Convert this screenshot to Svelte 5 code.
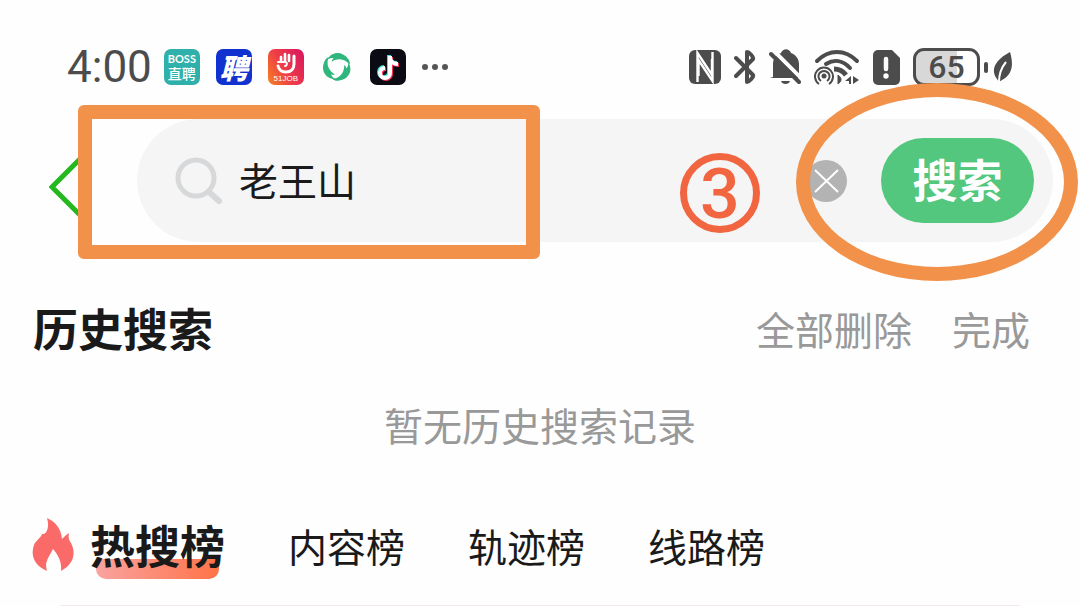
<script>
	const hotTitle = '热搜榜';
	const tabs = ['内容榜', '轨迹榜', '线路榜'];

	let keyword = $state('老王山');
	let active = $state(hotTitle);

	function clearKeyword() {
		keyword = '';
	}
</script>

<div class="page">
	<header class="status">
		<div class="group left">
			<span class="time">4:00</span>
			<span class="app boss"><b>BOSS</b><i>直聘</i></span>
			<span class="app pin">聘</span>
			<span class="app job">
				<svg width="24" height="22" viewBox="0 0 24 22" fill="none" stroke="#fff" stroke-linecap="round">
					<path d="M4 14c1 4 4 6 8 6 5 0 8-3 8-8V4" stroke-width="3" />
					<path d="M15 9V3M11 9V2M7 9V5" stroke-width="2.600" />
					<path d="M4 10h7c3 0 2 4 0 4" stroke-width="2" />
				</svg>
				<small>51JOB</small>
			</span>
			<svg class="swirl" width="30" height="30" viewBox="0 0 28 28" fill="#2fb67c">
				{#each [0, 120, 240] as angle}
					<path d="M5 7C9-1 19-1 24 6c2 2 2 4 2 6C22 7 16 5 9 9c0-1 1-3 2-3-2-1-4 0-6 1z" transform="rotate({angle} 14 14)" />
				{/each}
			</svg>
			<span class="app tiktok">
				<svg width="28" height="28" viewBox="0 0 28 28" fill="none" stroke-width="4">
					<path d="M15 2v17a5 5 0 1 1-5-5M15 3c0 4 3 7 8 7" stroke="#3de0dc" />
					<path d="M17 4v17a5 5 0 1 1-5-5M17 5c0 4 3 7 8 7" stroke="#f2305a" />
					<path d="M16 3v17a5 5 0 1 1-5-5M16 4c0 4 3 7 8 7" stroke="#fff" />
				</svg>
			</span>
			<svg class="dots" width="26" height="6" viewBox="0 0 26 6" fill="#555">
				<circle cx="3" cy="3" r="3" /><circle cx="13" cy="3" r="3" /><circle cx="23" cy="3" r="3" />
			</svg>
		</div>

		<div class="group right">
			<!-- nfc -->
			<svg width="32" height="34" viewBox="0 0 32 34">
				<rect width="32" height="34" rx="6" fill="#4c4c4c" />
				<path d="M8.500 32V3L23 25V9M23.500 2v29L9.500 10v16" fill="none" stroke="#fff" stroke-width="2.400" />
			</svg>
			<!-- bluetooth -->
			<svg width="22" height="36" viewBox="0 0 22 36" fill="none" stroke="#4c4c4c" stroke-width="4" stroke-linejoin="round" stroke-linecap="round">
				<path d="M2 9l17 17c1 2-4 7-6 7V3c2 0 7 5 6 7L2 27" />
			</svg>
			<!-- muted bell -->
			<svg width="32" height="36" viewBox="0 0 32 36">
				<path d="M4 28V15C4 9 8 6 12 4c2-5 8-5 10 0 5 2 8 6 8 11v13l1 1H1z" fill="#4c4c4c" />
				<path d="M12 32h9c-1 4-8 4-9 0z" fill="#4c4c4c" />
				<path d="M4 1l30 30" stroke="#fefefe" stroke-width="4" />
				<path d="M2 5l28 28" stroke="#4c4c4c" stroke-width="4" stroke-linecap="round" />
			</svg>
			<!-- wifi with hotspot -->
			<svg width="46" height="36" viewBox="0 0 46 36" fill="none" stroke="#4c4c4c">
				<path d="M3 12C15 0 31 0 43 12" stroke-width="4" stroke-linecap="round" />
				<path d="M12 15c8-5 17-4 24 4" stroke-width="4" stroke-linecap="round" />
				<path d="M20 20c6 0 9 2 12 6" stroke-width="5" />
				<path d="M24 26c4 3 4 6 0 9z" fill="#4c4c4c" stroke-width="1" />
				<circle cx="10" cy="27" r="2.500" fill="#4c4c4c" stroke="none" />
				<path d="M7 32a5.500 5.500 0 1 1 6 0M5 35a9 9 0 1 1 10 0" stroke-width="2" />
				<path d="M37 27v8h-2v-3h-4zM39 35v-8l6 4z" fill="#4c4c4c" stroke="none" />
			</svg>
			<!-- sim alert -->
			<svg width="27" height="35" viewBox="0 0 27 35">
				<path d="M5 0h14l8 8v22a5 5 0 0 1-5 5H5a5 5 0 0 1-5-5V5a5 5 0 0 1 5-5z" fill="#4c4c4c" />
				<path d="M13 9v10" stroke="#fff" stroke-width="4.500" stroke-linecap="round" />
				<circle cx="13" cy="26" r="2.700" fill="#fff" />
			</svg>
			<span class="battery">65</span>
			<!-- power saving leaf -->
			<svg width="20" height="30" viewBox="0 0 20 30">
				<path d="M17 0c3 10 4 22-8 28L6 30l-2-3C-3 18 2 8 17 0z" fill="#4c4c4c" />
				<path d="M13 10C8 16 6 22 6 30" fill="none" stroke="#fff" stroke-width="2" />
			</svg>
		</div>
	</header>

	<div class="search-row">
		<button class="back" aria-label="返回">
			<svg width="34" height="62" viewBox="0 0 34 62" fill="none" stroke="#22b81e" stroke-width="5">
				<path d="M31 3L3 31l28 28" />
			</svg>
		</button>
		<form class="search" onsubmit={(e) => e.preventDefault()}>
			<svg width="48" height="48" viewBox="0 0 48 48" fill="none" stroke="#d6d8da">
				<circle cx="21" cy="21" r="18" stroke-width="5" />
				<path d="M34 35l10 9" stroke-width="6" stroke-linecap="round" />
			</svg>
			<input type="text" aria-label="搜索关键词" bind:value={keyword} />
			<button type="button" class="clear" aria-label="清空" onclick={clearKeyword}>
				<svg width="42" height="42" viewBox="0 0 42 42">
					<circle cx="21" cy="21" r="21" fill="#b3b3b3" />
					<path d="M10 10l23 22M33 10L10 32" stroke="#fff" stroke-width="2" />
				</svg>
			</button>
			<button type="submit" class="submit">搜索</button>
		</form>

		<!-- tutorial marks drawn over the search row -->
		<div class="mark box"></div>
		<div class="mark step">3</div>
		<div class="mark ring"></div>
	</div>

	<section class="history">
		<div class="history-head">
			<h2>历史搜索</h2>
			<button>全部删除</button>
			<button>完成</button>
		</div>
		<p>暂无历史搜索记录</p>
	</section>

	<nav class="tabs">
		<button class="hot" onclick={() => (active = hotTitle)}>
			<svg width="42" height="54" viewBox="0 0 42 54">
				<path
					d="M15 0c9 4 14 11 15 21 2-2 4-4 7-6-1 5 0 7 2 10 6 12 1 22-10 28 1-8-2-15-8-22-4 8-9 13-6 22C3 48-2 38 2 27c2-5 6-6 8-11 4 1 8-6 5-16z"
					fill="#f96a69"
				/>
			</svg>
			<span class:active={active === hotTitle}>{hotTitle}</span>
		</button>
		{#each tabs as tab}
			<button class:current={active === tab} onclick={() => (active = tab)}>{tab}</button>
		{/each}
	</nav>
	<hr />
</div>

<style>
	:global(body) {
		margin: 0;
		background: #fefefe;
	}

	.page {
		font-family: 'Noto Sans CJK SC', sans-serif;
		color: #1a1a1a;
		overflow: hidden;
	}

	button {
		padding: 0;
		border: none;
		background: none;
		font: inherit;
		color: inherit;
		white-space: nowrap;
		cursor: pointer;
	}

	svg {
		display: block;
		flex: none;
	}

	.status {
		display: flex;
		justify-content: space-between;
		padding: 31px 67px 16px;
	}

	.group {
		display: flex;
		align-items: center;
		height: 72px;
	}

	.left {
		gap: 16px;
	}

	.right {
		gap: 13px;
	}

	.time {
		font: 44px/48px Roboto, sans-serif;
		color: #4c4c4c;
		margin-right: -4px;
	}

	.app {
		display: flex;
		flex-direction: column;
		align-items: center;
		justify-content: center;
		width: 36px;
		height: 36px;
		border-radius: 7px;
		color: #fff;
	}

	.boss {
		background: #2fb0aa;
	}

	.boss b {
		font: 700 11px/12px Lato, sans-serif;
	}

	.boss i {
		font-style: normal;
		font-weight: 500;
		font-size: 14px;
		line-height: 17px;
	}

	.pin {
		background: #1232cf;
		font-size: 28px;
		font-weight: 900;
		font-style: italic;
		line-height: 36px;
	}

	.job {
		background: linear-gradient(60deg, #f5821f, #ee3d48 45%, #d81460);
	}

	.job small {
		font: 8px/9px 'Liberation Sans', sans-serif;
	}

	.swirl {
		margin: 0 2px;
	}

	.tiktok {
		background: #0b0b14;
	}

	.battery {
		position: relative;
		width: 67px;
		height: 38px;
		box-sizing: border-box;
		border: 3px solid #4c4c4c;
		border-radius: 11px;
		background: linear-gradient(90deg, #d8d8d8 67%, #fefefe 67%);
		font: 500 32px/33px Roboto, sans-serif;
		text-align: center;
		color: #4c4c4c;
	}

	.battery::after {
		content: '';
		position: absolute;
		right: -11px;
		top: 11px;
		width: 4px;
		height: 11px;
		border-radius: 2px;
		background: #4c4c4c;
	}

	.search-row {
		position: relative;
		display: flex;
		align-items: center;
		padding: 0 27px 0 49px;
	}

	.back {
		width: 88px;
		padding-top: 12px;
	}

	.search {
		flex: 1;
		min-width: 0;
		display: flex;
		align-items: center;
		height: 123px;
		box-sizing: border-box;
		padding: 0 19px 0 38px;
		border-radius: 62px;
		background: #f5f5f5;
	}

	input {
		flex: 1;
		min-width: 0;
		margin: 0 16px;
		padding: 0 0 4px;
		border: none;
		outline: none;
		background: none;
		font: inherit;
		font-size: 39px;
		color: inherit;
	}

	.submit {
		width: 153px;
		height: 85px;
		margin-left: 34px;
		padding-bottom: 3px;
		border-radius: 43px;
		background: #52c77d;
		color: #fff;
		font-size: 45px;
		font-weight: 700;
		line-height: 82px;
	}

	.mark {
		position: absolute;
		box-sizing: border-box;
		pointer-events: none;
	}

	.box {
		left: 78px;
		top: -14px;
		width: 462px;
		height: 154px;
		border: 14px solid #f1914a;
		border-radius: 6px;
	}

	.step {
		right: 320px;
		top: 34px;
		width: 80px;
		height: 80px;
		border: 7px solid #f26541;
		border-radius: 50%;
		color: #f26541;
		font: 500 70px/68px Roboto, sans-serif;
		text-align: center;
	}

	.ring {
		right: 2px;
		top: -36px;
		width: 282px;
		height: 198px;
		border: 14px solid #f1914a;
		border-radius: 50%;
	}

	.history {
		padding-top: 56px;
	}

	.history-head {
		display: flex;
		align-items: center;
		gap: 40px;
		padding: 0 50px 0 33px;
	}

	h2 {
		flex: 1;
		margin: 0;
		font-size: 45px;
		line-height: 60px;
		font-weight: 700;
	}

	.history-head button,
	.history p {
		font-size: 39px;
		line-height: 60px;
		color: #999;
	}

	.history p {
		margin: 36px 0 0;
		text-align: center;
	}

	.tabs {
		display: flex;
		align-items: center;
		gap: 63px;
		padding: 61px 32px 0;
	}

	.tabs button {
		font-size: 39px;
		line-height: 60px;
	}

	.tabs .hot {
		display: flex;
		align-items: center;
		gap: 16px;
		font-size: 45px;
	}

	.hot span {
		position: relative;
		font-weight: 700;
	}

	.active::before {
		content: '';
		position: absolute;
		z-index: -1;
		left: 6px;
		right: 6px;
		bottom: -4px;
		height: 20px;
		border-radius: 0 0 10px 10px;
		background: linear-gradient(90deg, #f9a3a0, #ff7347);
	}

	.current {
		font-weight: 700;
	}

	hr {
		margin: 30px 60px 0;
		border: none;
		border-top: 1px solid #f3e9e9;
	}
</style>
